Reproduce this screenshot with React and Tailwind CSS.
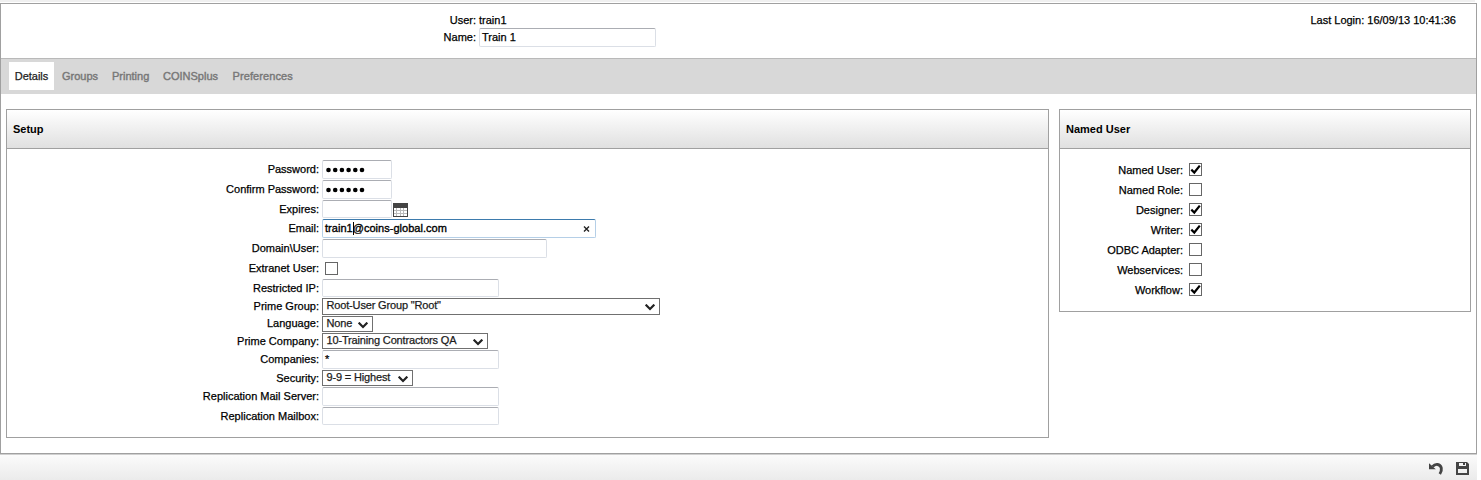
const field =
  "shrink-0 rounded-[2px] border border-[#dbdfe6] border-t-[#abadb3] bg-white px-[2px] text-left";

function Label({ children, up = "" }) {
  return (
    <div className={`h-[18px] w-[312px] shrink-0 text-right leading-[18px] whitespace-nowrap ${up}`}>
      {children}
    </div>
  );
}

function Row({ label, h, up, children }) {
  return (
    <div className={`flex shrink-0 items-start ${h}`}>
      <Label up={up}>{label}</Label>
      <div className="ml-[3px] flex h-full items-start">{children}</div>
    </div>
  );
}

function Field({ w, h = "h-[19px]", children }) {
  return (
    <div className={`${field} ${w} ${h} leading-[17px] whitespace-nowrap`}>{children}</div>
  );
}

function Dots() {
  return (
    <svg width="46" height="17" viewBox="0 0 46 17" className="block">
      {[0, 1, 2, 3, 4, 5].map((i) => (
        <circle key={i} cx={3.5 + i * 6.7} cy="9" r="2.3" fill="#000" />
      ))}
    </svg>
  );
}

function Select({ w, h, children }) {
  return (
    <div
      className={`flex shrink-0 items-start justify-between border border-[#707070] bg-white pr-[4px] pl-[3.5px] text-[#1c1c1c] ${w} ${h}`}
    >
      <span className="leading-[13px] tracking-[-0.16px] whitespace-nowrap">{children}</span>
      <svg width="10" height="7" viewBox="0 0 10 7" className="mt-[5px] block">
        <path d="M0.7 0.6L5 4.9L9.3 0.6" fill="none" stroke="#222" strokeWidth="2.1" />
      </svg>
    </div>
  );
}

function Check({ on }) {
  return (
    <div className="h-[13px] w-[13px] shrink-0 border border-[#666] bg-white">
      {on && (
        <svg width="11" height="11" viewBox="0 0 11 11" className="block">
          <path d="M1.3 5.6L4.3 8.5L9.8 1.6" fill="none" stroke="#000" strokeWidth="2.2" />
        </svg>
      )}
    </div>
  );
}

function Calendar() {
  return (
    <svg width="15" height="14" viewBox="0 0 15 14" className="mt-[3px] ml-[1px] block" shapeRendering="crispEdges">
      <rect width="15" height="14" fill="#444" />
      <rect x="1" y="5" width="13" height="8" fill="#bbb" />
      {[5, 8, 11].map((y) =>
        [1, 4, 8, 11].map((x) => (
          <rect key={`${x}-${y}`} x={x} y={y} width={x === 4 || x === 11 ? 3 : 2} height="2" fill="#fff" />
        ))
      )}
    </svg>
  );
}

function PanelHead({ children }) {
  return (
    <div className="h-[39px] shrink-0 border-b border-[#a0a0a0] bg-gradient-to-b from-white to-[#e0e0e0] pl-[6px] leading-[39px] font-bold [-webkit-text-stroke:0px]">
      {children}
    </div>
  );
}

const named = [
  ["Named User:", true],
  ["Named Role:", false],
  ["Designer:", true],
  ["Writer:", true],
  ["ODBC Adapter:", false],
  ["Webservices:", false],
  ["Workflow:", true],
];

export default function App() {
  return (
    <div className="flex h-[480px] w-[1481px] flex-col overflow-hidden bg-white font-['Liberation_Sans',Arial,sans-serif] text-[11px] text-black [-webkit-text-stroke:0.25px]">
      <div className="h-[2px] w-[1475px] shrink-0 bg-[#f0f0f0]" />
      <div className="mt-px flex h-[451px] w-[1477px] shrink-0 flex-col border border-[#a0a0a0]">
        <div className="flex h-[54px] shrink-0 justify-between">
          <div className="flex flex-col pt-[8px]">
            <div className="flex h-[16px] leading-[16px]">
              <div className="w-[475px] text-right">User:</div>
              <div className="ml-[3px]">train1</div>
            </div>
            <div className="flex h-[19px] leading-[19px]">
              <div className="w-[475px] text-right">Name:</div>
              <div className="ml-[3px] flex">
                <Field w="w-[177px]">Train 1</Field>
              </div>
            </div>
          </div>
          <div className="pt-[8px] pr-[20px] leading-[16px]">Last Login: 16/09/13 10:41:36</div>
        </div>
        <div className="flex h-[36px] shrink-0 items-start border-t border-[#b9b9b9] bg-[#d8d8d8] pt-[3px] pl-[8px] leading-[28px] text-[#777] [-webkit-text-stroke:0.4px]">
          <div className="h-[28px] w-[45px] bg-white text-center text-[#222] [-webkit-text-stroke:0.25px]">Details</div>
          <div className="ml-[8px] w-[50px]">Groups</div>
          <div className="w-[51px]">Printing</div>
          <div className="w-[69.5px]">COINSplus</div>
          <div className="tracking-[0.1px]">Preferences</div>
        </div>
        <div className="flex items-start gap-[10px] pt-[15px] pl-[5px]">
          <div className="flex h-[329px] w-[1043px] shrink-0 flex-col border border-[#a0a0a0]">
            <PanelHead>Setup</PanelHead>
            <div className="flex flex-col pt-[11px]">
              <Row label="Password:" h="h-[20px]">
                <Field w="w-[70px]"><Dots /></Field>
              </Row>
              <Row label="Confirm Password:" h="h-[20px]">
                <Field w="w-[70px]"><Dots /></Field>
              </Row>
              <Row label="Expires:" h="h-[19px]">
                <Field w="w-[70px]" h="h-[18px]" />
                <Calendar />
              </Row>
              <Row label="Email:" h="h-[20px]">
                <div className="flex h-[19px] w-[274px] justify-between rounded-[2px] border border-[#b5cfe7] border-t-[#3d7bad] pr-[5px] pl-[2px] leading-[17px]">
                  <span className="relative tracking-[0.03px] [-webkit-text-stroke:0.35px]">
                    train1@coins-global.com
                    <span className="absolute top-[2px] left-[28px] h-[13px] w-px bg-black" />
                  </span>
                  <svg width="7" height="17" viewBox="0 0 7 17" className="block">
                    <path d="M1 6.5L6 11.5M6 6.5L1 11.5" stroke="#222" strokeWidth="1.4" />
                  </svg>
                </div>
              </Row>
              <Row label="Domain\User:" h="h-[20px]">
                <Field w="w-[225px]" />
              </Row>
              <Row label="Extranet User:" h="h-[20px]">
                <div className="pt-[3px] pl-[3px]"><Check /></div>
              </Row>
              <Row label="Restricted IP:" h="h-[19px]">
                <Field w="w-[177px]" h="h-[18px]" />
              </Row>
              <Row label="Prime Group:" h="h-[18px]" up="-mt-px">
                <Select w="w-[338px]" h="h-[17px]">Root-User Group "Root"</Select>
              </Row>
              <Row label="Language:" h="h-[17px]" up="-mt-[2px]">
                <Select w="w-[51px]" h="h-[16px]">None</Select>
              </Row>
              <Row label="Prime Company:" h="h-[17px]" up="-mt-px">
                <Select w="w-[166px]" h="h-[16px]">10-Training Contractors QA</Select>
              </Row>
              <Row label="Companies:" h="h-[20px]">
                <Field w="w-[177px]">*</Field>
              </Row>
              <Row label="Security:" h="h-[17px]" up="-mt-px">
                <Select w="w-[91px]" h="h-[16px]">9-9 = Highest</Select>
              </Row>
              <Row label="Replication Mail Server:" h="h-[20px]">
                <Field w="w-[177px]" />
              </Row>
              <Row label="Replication Mailbox:" h="h-[18px]">
                <Field w="w-[177px]" h="h-[18px]" />
              </Row>
            </div>
          </div>
          <div className="flex h-[203px] w-[412px] shrink-0 flex-col border border-[#a0a0a0]">
            <PanelHead>Named User</PanelHead>
            <div className="flex flex-col pt-[11px]">
              {named.map(([t, on]) => (
                <div key={t} className="flex h-[20px] items-start">
                  <div className="w-[123px] text-right leading-[20px]">{t}</div>
                  <div className="pt-[3px] pl-[6px]"><Check on={on} /></div>
                </div>
              ))}
            </div>
          </div>
        </div>
      </div>
      <div className="flex h-[26px] w-[1477px] shrink-0 items-start justify-end border-t border-[#cfcfcf] bg-gradient-to-b from-[#fbfbfb] to-[#ebebeb] pt-[7px] pr-[7px]">
        <svg width="15" height="14" viewBox="0 0 15 14" className="mr-[12px] block">
          <path d="M3.5 4.6C6.5 1.2 11.2 1.8 12.3 6Q12.9 9.2 10.8 12" fill="none" stroke="#444" strokeWidth="2.9" />
          <path d="M0 1.2V7.2H6.8Z" fill="#444" />
        </svg>
        <svg width="14" height="13" viewBox="0 0 14 13" className="block">
          <path fillRule="evenodd" fill="#444" d="M0 0H11L13 2V13H0ZM3 1V4H10V1ZM2 7V11H11V7Z" />
          <rect x="7" y="1" width="2" height="2" fill="#444" />
        </svg>
      </div>
    </div>
  );
}
